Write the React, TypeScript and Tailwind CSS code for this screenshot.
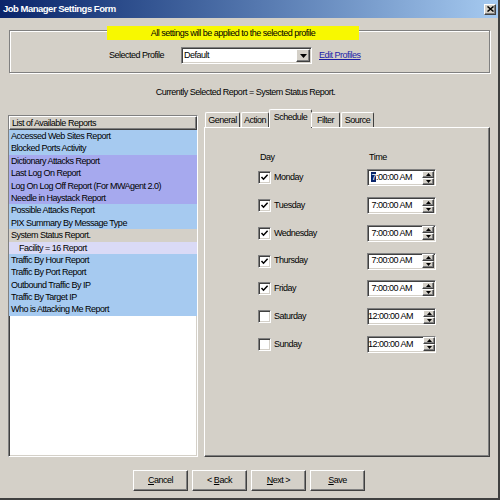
import { Fragment } from "react";

const reports = [
  { name: "Accessed Web Sites Report", bg: "bg-[#a6caf0]" },
  { name: "Blocked Ports Activity", bg: "bg-[#a6caf0]" },
  { name: "Dictionary Attacks Report", bg: "bg-[#a6a9ee]" },
  { name: "Last Log On Report", bg: "bg-[#a6a9ee]" },
  { name: "Log On Log Off Report (For MWAgent 2.0)", bg: "bg-[#a6a9ee]" },
  { name: "Needle in Haystack Report", bg: "bg-[#a6a9ee]" },
  { name: "Possible Attacks Report", bg: "bg-[#a6caf0]" },
  { name: "PIX Summary By Message Type", bg: "bg-[#a6caf0]" },
  { name: "System Status Report.", bg: "bg-[#d4d0c8]" },
  { name: "Facility = 16 Report", bg: "bg-[#dadaf6]", indent: true },
  { name: "Traffic By Hour Report", bg: "bg-[#a6caf0]" },
  { name: "Traffic By Port Report", bg: "bg-[#a6caf0]" },
  { name: "Outbound Traffic By IP", bg: "bg-[#a6caf0]" },
  { name: "Traffic By Target IP", bg: "bg-[#a6caf0]" },
  { name: "Who is Attacking Me Report", bg: "bg-[#a6caf0]" },
];

const days = [
  { day: "Monday", on: true, time: "7:00:00 AM", focus: true },
  { day: "Tuesday", on: true, time: "7:00:00 AM" },
  { day: "Wednesday", on: true, time: "7:00:00 AM" },
  { day: "Thursday", on: true, time: "7:00:00 AM" },
  { day: "Friday", on: true, time: "7:00:00 AM" },
  { day: "Saturday", on: false, time: "12:00:00 AM" },
  { day: "Sunday", on: false, time: "12:00:00 AM" },
];

const tabs = [
  { label: "General", w: "w-[35px]" },
  { label: "Action", w: "w-[28px]" },
  { label: "Schedule", w: "w-[43px]", active: true },
  { label: "Filter", w: "w-[29px]" },
  { label: "Source", w: "w-[33px]" },
];

const raised =
  "border border-t-white border-l-white border-r-[#404040] border-b-[#404040] shadow-[inset_-1px_-1px_0_#808080]";
const sunken =
  "border border-t-[#808080] border-l-[#808080] border-r-white border-b-white shadow-[inset_1px_1px_0_#404040,inset_-1px_-1px_0_#d4d0c8]";

function Check({ on }: { on: boolean }) {
  return (
    <div className={`w-[13px] h-[13px] bg-white shrink-0 ${sunken}`}>
      {on && (
        <svg width="11" height="11" viewBox="0 0 11 11">
          <path d="M2.5 5 L4.5 7.2 L8.6 2.8" fill="none" stroke="#000" strokeWidth="1.5" />
        </svg>
      )}
    </div>
  );
}

function Spinner() {
  return (
    <div className="flex flex-col w-[12px] mr-[1px] shrink-0">
      <div className={`h-[7px] bg-[#d4d0c8] flex items-center justify-center ${raised}`}>
        <svg width="5" height="3" viewBox="0 0 5 3">
          <polygon points="2.5,0 5,3 0,3" fill="#000" />
        </svg>
      </div>
      <div className={`h-[7px] bg-[#d4d0c8] flex items-center justify-center ${raised}`}>
        <svg width="5" height="3" viewBox="0 0 5 3">
          <polygon points="0,0 5,0 2.5,3" fill="#000" />
        </svg>
      </div>
    </div>
  );
}

function Button({ pre, hot, rest }: { pre?: string; hot: string; rest: string }) {
  return (
    <button className={`w-[55px] h-[21px] bg-[#d4d0c8] text-black whitespace-pre ${raised}`}>
      {pre}
      <span className="underline">{hot}</span>
      {rest}
    </button>
  );
}

export default function App() {
  return (
    <div className="w-[500px] h-[500px] bg-[#d4d0c8] overflow-hidden border-r-2 border-b-2 border-r-[#404040] border-b-[#404040] font-['Liberation_Sans',Arial,sans-serif] text-[9px] tracking-[-0.5px] text-black">
      {/* ================= TITLE BAR ================= */}
      <div className="h-[18px] flex items-center justify-between bg-gradient-to-r from-[#0a246a] to-[#a6caf0] pl-[3px] pr-[2px]">
        <span className="text-white font-bold text-[9.5px]">Job Manager Settings Form</span>
        <div className={`w-[12px] h-[11px] bg-[#d4d0c8] flex items-center justify-center ${raised}`}>
          <svg width="7" height="6" viewBox="0 0 7 6">
            <path d="M0.5 0.5 L6.5 5.5 M6.5 0.5 L0.5 5.5" stroke="#000" strokeWidth="1.5" />
          </svg>
        </div>
      </div>

      {/* ================= PROFILE GROUP ================= */}
      <div className="relative mt-[12px] ml-[9px] w-[481px] h-[43px] border border-[#808080] shadow-[inset_1px_1px_0_#fff,1px_1px_0_#fff]">
        <div className="absolute left-[97px] top-[-5px] w-[252px] h-[14px] bg-[#f8f800] text-center leading-[14px]">
          All settings will be applied to the selected profile
        </div>
        <div className="flex items-center pt-[16px] pl-[99px]">
          <span className="w-[72px]">Selected Profile</span>
          <div className={`w-[131px] h-[17px] bg-white flex items-center ${sunken}`}>
            <span className="flex-1 pl-[2px]">Default</span>
            <div className={`w-[14px] h-[13px] mr-[1px] bg-[#d4d0c8] flex items-center justify-center ${raised}`}>
              <svg width="7" height="4" viewBox="0 0 7 4">
                <polygon points="0,0 7,0 3.5,4" fill="#000" />
              </svg>
            </div>
          </div>
          <span className="ml-[7px] text-[#1c1ca8] underline">Edit Profiles</span>
        </div>
      </div>

      {/* ================= CURRENT REPORT ================= */}
      <div className="mt-[13px] w-[491px] text-center leading-[13px]">
        Currently Selected Report = System Status Report.
      </div>

      {/* ================= MAIN ================= */}
      <div className="mt-[10px] h-[348px] flex">
        {/* list */}
        <div className={`mt-[6px] ml-[8px] w-[190px] h-[342px] bg-white ${sunken}`}>
          <div className={`h-[14px] bg-[#d4d0c8] leading-[12px] pl-[2px] ${raised}`}>
            List of Available Reports
          </div>
          {reports.map((r) => (
            <div
              key={r.name}
              className={`h-[12.4px] leading-[12.4px] whitespace-nowrap ${r.bg} ${r.indent ? "pl-[10px]" : "pl-[2px]"}`}
            >
              {r.name}
            </div>
          ))}
        </div>

        {/* tabs */}
        <div className="ml-[6px] w-[286px] flex flex-col">
          <div className="h-[18px] flex items-end pl-[1px] relative z-10">
            {tabs.map((t) => (
              <div
                key={t.label}
                className={`${t.w} text-center whitespace-nowrap border-t border-l border-r border-t-white border-l-white border-r-[#404040] rounded-t-[2px] bg-[#d4d0c8] ${
                  t.active ? "h-[19px] -mb-[1px] leading-[15px] -mx-[1px]" : "h-[15px] leading-[14px] mr-[1px]"
                }`}
              >
                {t.label}
              </div>
            ))}
          </div>
          <div className="flex-1 border border-t-white border-l-white border-r-[#404040] border-b-[#404040] shadow-[inset_-1px_-1px_0_#808080]">
            <div className="ml-[53px] pt-[22px]">
              <div className="flex leading-[14px]">
                <span className="w-[110px] pl-[2px]">Day</span>
                <span className="pl-[1px]">Time</span>
              </div>
              <div>
                {days.map((d) => (
                  <Fragment key={d.day}>
                    <div className="h-[27.75px] flex items-center">
                      <div className="w-[109px] flex items-center">
                        <Check on={d.on} />
                        <span className="ml-[3px]">{d.day}</span>
                      </div>
                      <div className={`w-[69px] h-[17px] bg-white flex items-center ${sunken}`}>
                        <span className="flex-1 text-right pr-[10px] whitespace-nowrap">
                          {d.focus ? (
                            <>
                              <span className="bg-[#0a246a] text-white">7</span>:00:00 AM
                            </>
                          ) : (
                            d.time
                          )}
                        </span>
                        <Spinner />
                      </div>
                    </div>
                  </Fragment>
                ))}
              </div>
            </div>
          </div>
        </div>
      </div>

      {/* ================= BUTTONS ================= */}
      <div className="mt-[13px] ml-[133px] flex gap-[4px]">
        <Button hot="C" rest="ancel" />
        <Button pre="< " hot="B" rest="ack" />
        <Button hot="N" rest="ext >" />
        <Button hot="S" rest="ave" />
      </div>
    </div>
  );
}
